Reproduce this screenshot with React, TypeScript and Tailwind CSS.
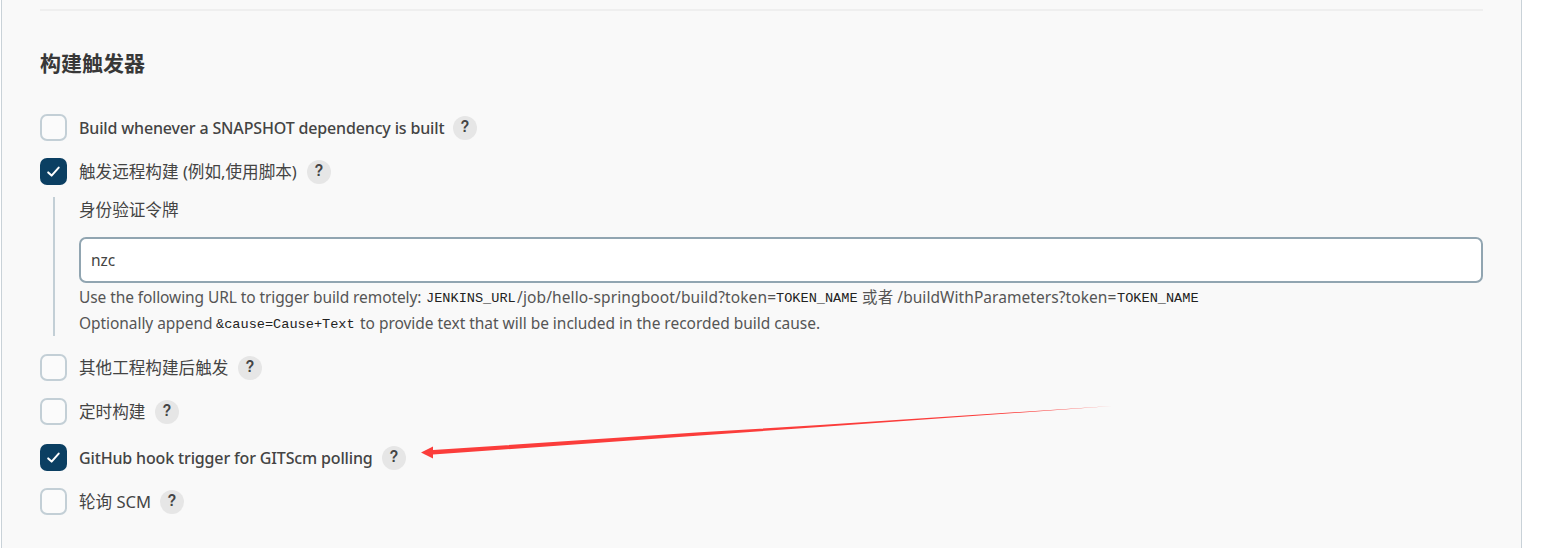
import type { ReactNode } from "react";

const SANS = "font-['Noto_Sans','Noto_Sans_CJK_SC',sans-serif]";

function CheckBox({ checked = false }: { checked?: boolean }) {
  return (
    <span
      role="checkbox"
      aria-checked={checked}
      className={
        checked
          ? "flex size-[27px] shrink-0 items-center justify-center rounded-[7px] bg-[#0b3f62]"
          : "size-[27px] shrink-0 rounded-[7px] border-2 border-[#c3cfd6] bg-[#fbfbfb]"
      }
    >
      {checked && (
        <svg width="27" height="27" viewBox="0 0 27 27" fill="none" stroke="#fff" strokeWidth="2" strokeLinecap="round" strokeLinejoin="round">
          <path d="M8.2 14.4 11.6 17.6 18.7 9.6" />
        </svg>
      )}
    </span>
  );
}

function Help() {
  return (
    <button className="flex size-6 shrink-0 items-center justify-center rounded-full bg-[#e6e6e6] pb-px font-['Liberation_Sans',sans-serif] text-[16px] leading-none font-bold text-[#444]">
      <span className="scale-x-90">?</span>
    </button>
  );
}

function Option({ checked, text, className }: { checked?: boolean; text: string; className: string }) {
  return (
    <div className="flex h-[27px] items-center">
      <CheckBox checked={checked} />
      <span className={`ml-3 mr-2 whitespace-pre leading-6 ${className}`}>{text}</span>
      <Help />
    </div>
  );
}

function Code({ children, className }: { children: ReactNode; className: string }) {
  return (
    <code className={`inline-block whitespace-pre pt-[3px] font-['Liberation_Mono',monospace] text-[13.6px] text-[#222] ${className}`}>
      {children}
    </code>
  );
}

export default function App() {
  return (
    <div className={`h-[548px] w-[1554px] overflow-hidden bg-white pl-px text-[#444] ${SANS}`}>
      <main className="relative h-full w-[1521px] border-x border-[#c9d2d8] bg-[#f9f9f9] pr-[38px] pl-[38px] pt-[9px]">
        <div className="h-[2px] bg-[#efefef]" />
        <h2 className="mt-[36px] h-8 text-[21px] leading-8 font-bold whitespace-nowrap text-[#383838]">构建触发器</h2>

        <div className="mt-[35px] flex flex-col">
          <Option text="Build whenever a SNAPSHOT dependency is built" className="w-[366px] text-[16px] font-medium tracking-[-0.155px]" />
          <div className="h-[17px]" />
          <Option checked text="触发远程构建 (例如,使用脚本)" className="w-[220px] text-[16.6px]" />

          <section className="mt-3 ml-[13px] h-[139px] border-l-2 border-[#c3cfd6] pl-6">
            <label className="block h-[27px] text-[16.6px] leading-[26px]">身份验证令牌</label>
            <input
              readOnly
              value="nzc"
              className="mt-[13px] block h-[46px] w-full rounded-[7px] border-2 border-[#91a5b1] bg-white px-[10px] text-[15.5px] text-[#444] outline-none"
            />
            <div className="mt-px text-[15.5px] leading-[26px] whitespace-nowrap text-[#555]">
              <div className="flex h-[26px] items-center whitespace-pre">
                <span className="w-[347px] tracking-[-0.09px]">Use the following URL to trigger build remotely: </span>
                <Code className="w-[91px]">JENKINS_URL</Code>
                <span className="w-[259px] tracking-[0.12px]">/job/hello-springboot/build?token=</span>
                <Code className="w-[82px]">TOKEN_NAME</Code>
                <span className="w-[259px] tracking-[0.06px]"> 或者 /buildWithParameters?token=</span>
                <Code className="w-[82px]">TOKEN_NAME</Code>
              </div>
              <div className="flex h-[26px] items-center whitespace-pre">
                <span className="w-[137px] tracking-[-0.06px]">Optionally append </span>
                <Code className="w-[140px]">&amp;cause=Cause+Text</Code>
                <span className="tracking-[-0.03px]"> to provide text that will be included in the recorded build cause.</span>
              </div>
            </div>
          </section>

          <div className="h-[18px]" />
          <Option text="其他工程构建后触发" className="w-[151px] text-[16.6px]" />
          <div className="h-[17px]" />
          <Option text="定时构建" className="w-[68px] text-[16.6px]" />
          <div className="h-[19px]" />
          <Option checked text="GitHub hook trigger for GITScm polling" className="w-[295px] text-[16px] font-medium tracking-[-0.15px]" />
          <div className="h-[17px]" />
          <Option text="轮询 SCM" className="w-[73px] text-[16.6px]" />
        </div>

        <svg className="pointer-events-none absolute top-[400px] left-[418px]" width="700" height="64" viewBox="420 400 700 64">
          <path d="M421 452.5 433 446.5V450L700 432.3 820 425 1112 406 820 427 700 435.4 433 454.6V458.5Z" fill="#fb3d3b" />
        </svg>
      </main>
    </div>
  );
}
